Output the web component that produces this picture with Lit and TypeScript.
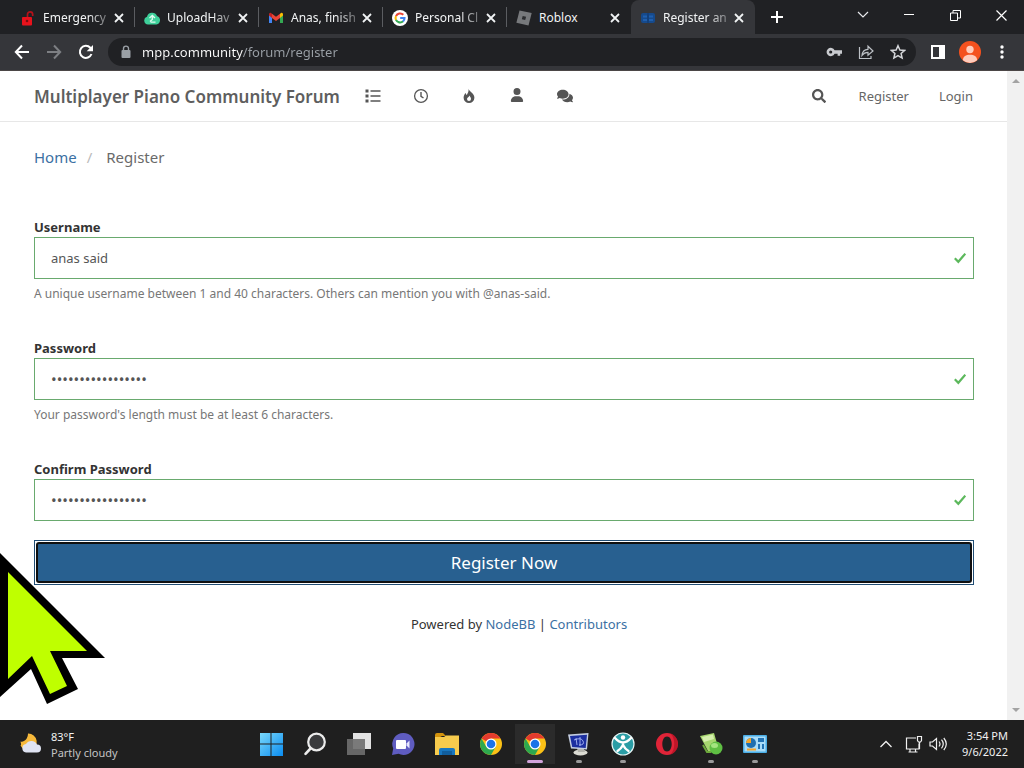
import { LitElement, html, svg, css, TemplateResult } from "lit";
import { customElement, property } from "lit/decorators.js";
import { classMap } from "lit/directives/class-map.js";

const icon = (viewBox: string, size: number, body: TemplateResult) =>
  html`<svg viewBox=${viewBox} width=${size} height=${size} aria-hidden="true">${body}</svg>`;

const closeGlyph = icon("0 0 10 10", 10, svg`<path d="M1 1l8 8M9 1l-8 8" fill="none" stroke="#f1f3f4" stroke-width="1.8"/>`);

const favicons = {
  lock: icon("0 0 16 16", 16, svg`
    <rect x="2" y="7" width="10" height="8.500" rx="1" fill="#e8121c"/>
    <path d="M7.500 7V4.500a2.600 2.600 0 0 1 5.200 0V6" fill="none" stroke="#b5121a" stroke-width="1.700"/>
    <circle cx="7" cy="11" r="1.300" fill="#7d0b10"/>`),
  cloud: icon("0 0 16 16", 16, svg`
    <path d="M4 14.500a4 4 0 0 1-1-7.800A5.300 5.300 0 0 1 13 6a4.400 4.400 0 0 1-.5 8.500z" fill="#3ecf9a"/>
    <path d="M5.500 8l2.800-2.500L11 8M8.300 6v3.500l-2.300 2M6.500 12.200h5" fill="none" stroke="#dffcf0" stroke-width="1.300"/>`),
  gmail: icon("0 0 16 16", 16, svg`
    <path d="M1 3.800V13h3V7z" fill="#4285f4"/><path d="M15 3.800V13h-3V7z" fill="#34a853"/>
    <path d="M12 3.800 13.400 2.700Q15 2.400 15 4.200V5.600L12 8z" fill="#fbbc04"/>
    <path d="M4 3.800 2.600 2.700Q1 2.400 1 4.200V5.600L4 8z" fill="#c5221f"/>
    <path d="M4 3.800l4 3 4-3V8l-4 3-4-3z" fill="#ea4335"/>`),
  google: icon("0 0 16 16", 16, svg`
    <circle cx="8" cy="8" r="8" fill="#fff"/>
    <g fill="none" stroke-width="2.100">
      <path d="M11.300 4.800A4.500 4.500 0 0 0 4 6.200" stroke="#ea4335"/>
      <path d="M4 6.100a4.500 4.500 0 0 0 0 3.900" stroke="#fbbc05"/>
      <path d="M4 9.900a4.500 4.500 0 0 0 7.100 1.400" stroke="#34a853"/>
      <path d="M11 11.400A4.500 4.500 0 0 0 12.500 8H8.200" stroke="#4285f4"/>
    </g>`),
  roblox: icon("0 0 16 16", 16, svg`
    <path d="M3.500.5l12.200 2.600L12.500 15.500.4 12.700z" fill="#77797c"/>
    <path d="M6.700 6l3.400.8-.9 3.300-3.400-.8z" fill="#2b2c2f"/>`),
  piano: icon("0 0 16 16", 16, svg`
    <rect x="1" y="3" width="14" height="10" rx="2" fill="#164a8c"/>
    <path d="M3 5.500h4v2H3zM3 9h4v2H3zM9 5.500h4v2H9zM9 9h4v2H9z" fill="#1f5fae"/>
    <path d="M8 3v10" stroke="#10376a"/>`),
};

@customElement("browser-tab")
class BrowserTab extends LitElement {
  @property() label = "";
  @property({ attribute: false }) favicon?: TemplateResult;
  @property({ type: Boolean, reflect: true }) active = false;
  @property({ type: Boolean, reflect: true }) divided = false;

  static styles = css`
    :host { display: flex; box-sizing: border-box; flex: 0 1 124px; min-width: 0; height: 34px; align-items: center; padding: 1px 10px 0 9px; border-right: 1px solid transparent; }
    :host([divided]) { border-image: linear-gradient(transparent 8px, #5b5d61 8px, #5b5d61 26px, transparent 26px) 1; }
    :host([active]) { background: #35363a; border-radius: 8px 8px 0 0; }
    .title { all: unset; flex: 1; min-width: 0; display: flex; align-items: center; gap: 7px; }
    svg { flex: none; display: block; }
    .text { flex: 1; min-width: 0; white-space: nowrap; font-size: 12px; line-height: 18px; color: #f1f3f4; }
    .text.fade { -webkit-mask-image: linear-gradient(to right, #000 65%, #0003); mask-image: linear-gradient(to right, #000 65%, #0003); }
    .close { all: unset; display: flex; flex: none; padding: 2px 0 2px 2px; }
  `;

  render() {
    return html`
      <button class="title">${this.favicon}<span class=${classMap({ text: true, fade: this.label.length > 8 })}>${this.label}</span></button>
      <button class="close" aria-label="Close tab">${closeGlyph}</button>`;
  }
}

@customElement("browser-chrome")
class BrowserChrome extends LitElement {
  static styles = css`
    :host { display: block; background: #202124; }
    button { all: unset; display: flex; align-items: center; justify-content: center; }
    svg { display: block; }
    .strip { display: flex; height: 34px; padding-left: 11px; }
    .tabs { display: flex; flex: 0 1 744px; min-width: 0; }
    .new { width: 44px; flex: none; }
    .spacer { flex: 1; }
    .win { width: 46px; height: 30px; flex: none; }
    .toolbar { display: flex; align-items: center; height: 36px; background: #35363a; border-bottom: 1px solid #4b4646; padding: 0 6px; }
    .tool { width: 32px; height: 28px; flex: none; }
    .omnibox { display: flex; align-items: center; flex: 1; min-width: 0; height: 28px; margin: 0 6px; padding: 0 2px 0 10px; border-radius: 14px; background: #202124; }
    .url { flex: 1; min-width: 0; margin-left: 8px; padding: 0; border: 0; outline: 0; font: 13px/20px "Noto Sans", "Open Sans", sans-serif; color: #fff; -webkit-text-fill-color: transparent; background: linear-gradient(to right, #fff 101px, #9aa0a6 101px); -webkit-background-clip: text; background-clip: text; }
  `;

  render() {
    const tabs = [
      { label: "Emergency", favicon: favicons.lock },
      { label: "UploadHav", favicon: favicons.cloud },
      { label: "Anas, finish", favicon: favicons.gmail },
      { label: "Personal Cl", favicon: favicons.google },
      { label: "Roblox", favicon: favicons.roblox },
      { label: "Register an", favicon: favicons.piano },
    ];
    const last = tabs.length - 1;
    return html`
      <div class="strip">
        <div class="tabs">
          ${tabs.map((t, i) => html`<browser-tab .label=${t.label} .favicon=${t.favicon} ?active=${i === last} ?divided=${i < last - 1}></browser-tab>`)}
        </div>
        <button class="new" aria-label="New tab">${icon("0 0 12 12", 12, svg`<path d="M6 0v12M0 6h12" stroke="#fff" stroke-width="2"/>`)}</button>
        <span class="spacer"></span>
        <button class="win" aria-label="Search tabs">${icon("0 0 12 12", 12, svg`<path d="M1 3l5 5 5-5" fill="none" stroke="#e8eaed" stroke-width="1.200"/>`)}</button>
        <button class="win" aria-label="Minimize">${icon("0 0 10 10", 10, svg`<path d="M0 4.500h10" stroke="#fff"/>`)}</button>
        <button class="win" aria-label="Restore">${icon("0 0 11 11", 11, svg`<path d="M.5 3h7v7.500h-7zM3 3V.5h7.500V8h-3" fill="none" stroke="#fff"/>`)}</button>
        <button class="win" aria-label="Close">${icon("0 0 11 11", 11, svg`<path d="M.5.5l10 10M10.500.5l-10 10" stroke="#fff" stroke-width="1.200"/>`)}</button>
      </div>
      <div class="toolbar">
        <button class="tool" aria-label="Back">${icon("0 0 16 16", 16, svg`<path d="M15 8H2M8 1.500L1.800 8 8 14.500" fill="none" stroke="#fff" stroke-width="2"/>`)}</button>
        <button class="tool" aria-label="Forward">${icon("0 0 16 16", 16, svg`<path d="M1 8h13M8 1.500L14.200 8 8 14.500" fill="none" stroke="#7d7f83" stroke-width="2"/>`)}</button>
        <button class="tool" aria-label="Reload">${icon("0 0 16 16", 16, svg`<path d="M13.500 10A6 6 0 1 1 12.300 3.800l1.200 1.300" fill="none" stroke="#fff" stroke-width="2"/><path d="M15 1v6.300H8.700z" fill="#fff"/>`)}</button>
        <div class="omnibox">
          ${icon("0 0 16 16", 16, svg`<rect x="3.500" y="6" width="9" height="8" rx="1" fill="#9aa0a6"/><path d="M5.500 6.500V4.600a2.500 2.500 0 0 1 5 0v1.900" fill="none" stroke="#9aa0a6" stroke-width="1.400"/>`)}
          <input class="url" aria-label="Address" .value=${"mpp.community/forum/register"} />
          <button class="tool" aria-label="Passwords">${icon("0 0 16 16", 16, svg`<path d="M8.600 6.300a4.200 4.200 0 1 0 0 3.400h3v2h2.600v-2H16V6.300zM4.700 9.600a1.600 1.600 0 1 1 0-3.200 1.600 1.600 0 0 1 0 3.200z" fill="#c9cbcf"/>`)}</button>
          <button class="tool" aria-label="Share">${icon("0 0 16 16", 16, svg`<path d="M1.500 3v11.500h11.500V12M4 11.500c.3-4 2.500-6 6-6.200V2.200L15 7l-5 4.300V8.400c-2.800 0-4.500 1-6 3.100z" fill="none" stroke="#bdc1c6" stroke-width="1.200"/>`)}</button>
          <button class="tool" aria-label="Bookmark">${icon("0 0 16 16", 16, svg`<path d="M8 1.700l1.900 4.300 4.700.4-3.500 3.100 1 4.600L8 11.700l-4.100 2.400 1-4.600L1.400 6.400l4.700-.4z" fill="none" stroke="#d5d7da" stroke-width="1.500"/>`)}</button>
        </div>
        <button class="tool" aria-label="Side panel">${icon("0 0 14 14", 14, svg`<path d="M1 1h12v12H1z" fill="none" stroke="#fff" stroke-width="2"/><path d="M8 1h5v12H8z" fill="#fff"/>`)}</button>
        <button class="tool" aria-label="Profile">${icon("0 0 22 22", 22, svg`<circle cx="11" cy="11" r="11" fill="#f4511e"/><circle cx="11" cy="8.500" r="3.700" fill="#ffccbc"/><path d="M3.800 19.300C4 15.500 7 13.800 11 13.800s7 1.700 7.200 5.500A11 11 0 0 1 3.800 19.300z" fill="#ffccbc"/>`)}</button>
        <button class="tool" aria-label="Menu">${icon("0 0 14 14", 14, svg`<g fill="#fff"><circle cx="7" cy="2" r="1.700"/><circle cx="7" cy="7" r="1.700"/><circle cx="7" cy="12" r="1.700"/></g>`)}</button>
      </div>`;
  }
}

const forumIcons = [
  { name: "Categories", art: icon("0 0 16 16", 16, svg`<path d="M.5 1.500h3v3h-3zM.5 6.500h3v3h-3zM.5 11.500h3v3h-3zM5.500 2.200H15.500v1.600H5.500zM5.500 7.200H15.500v1.600H5.500zM5.500 12.200H15.500v1.600H5.500z" fill="#555"/>`) },
  { name: "Recent", art: icon("0 0 16 16", 16, svg`<circle cx="8" cy="8" r="6.400" fill="none" stroke="#555" stroke-width="1.300"/><path d="M8 4v4.300l2.500 1.700" fill="none" stroke="#555" stroke-width="1.400"/>`) },
  { name: "Popular", art: icon("0 0 16 16", 16, svg`<path d="M7.500.8c.3 2.500 5.900 4.400 5.900 8.900a5.400 5.400 0 0 1-10.800 0c0-2.100 1-3.700 2.200-4.700.2 1.200.5 1.700 1 1.900C6.800 5 7.900 4 7.500.8zM8.300 7.400c.1 1.400-2.300 2-2.300 3.700a2 2 0 0 0 4 0c0-1.300-.7-2.500-1.700-3.700z" fill="#555" fill-rule="evenodd"/>`) },
  { name: "Users", art: icon("-32 0 512 512", 14, svg`<path fill="#555" d="M224 256A128 128 0 1 0 224 0a128 128 0 1 0 0 256zm-45.700 48C79.800 304 0 383.800 0 482.300C0 498.700 13.300 512 29.700 512H418.300c16.400 0 29.700-13.300 29.700-29.700C448 383.800 368.200 304 269.700 304H178.300z"/>`) },
  { name: "Chats", art: icon("0 -32 576 576", 16, svg`<path fill="#555" d="M416 192c0-88.400-93.100-160-208-160S0 103.600 0 192c0 34.300 14.100 65.900 38 92-13.400 30.200-35.500 54.200-35.800 54.500-2.200 2.300-2.800 5.700-1.500 8.700S4.800 352 8 352c36.600 0 66.900-12.300 88.700-25 32.200 15.700 70.300 25 111.300 25 114.900 0 208-71.600 208-160zm122 220c23.900-26 38-57.700 38-92 0-66.900-53.500-124.200-129.300-148.100.9 6.600 1.300 13.300 1.300 20.100 0 105.900-107.700 192-240 192-10.800 0-21.300-.8-31.700-1.900C207.800 439.600 281.800 480 368 480c41 0 79.100-9.200 111.300-25 21.800 12.700 52.100 25 88.700 25 3.200 0 6.100-1.900 7.300-4.800 1.300-2.900.7-6.300-1.500-8.700-.3-.3-22.400-24.200-35.800-54.500z"/>`) },
];

const searchGlyph = icon("0 0 512 512", 14, svg`<path fill="#555" d="M505 442.700L405.300 343c-4.500-4.500-10.600-7-17-7H372c27.600-35.300 44-79.700 44-128C416 93.100 322.900 0 208 0S0 93.100 0 208s93.100 208 208 208c48.300 0 92.700-16.400 128-44v16.300c0 6.400 2.500 12.500 7 17l99.700 99.700c9.400 9.400 24.600 9.400 33.900 0l28.300-28.300c9.400-9.400 9.400-24.600.1-34zM208 336c-70.700 0-128-57.200-128-128 0-70.700 57.200-128 128-128 70.700 0 128 57.200 128 128 0 70.700-57.200 128-128 128z"/>`);

const checkGlyph = icon("0 0 12 12", 12, svg`<path fill="none" stroke="#5cb85c" stroke-width="2.200" d="M.8 6.300L4.300 9.800 11.300 1.600"/>`);

@customElement("forum-page")
class ForumPage extends LitElement {
  static styles = css`
    :host { display: flex; background: #fff; color: #333; overflow: hidden; font-size: 13px; line-height: 20px; }
    .page { flex: 1; min-width: 0; }
    svg { display: block; }
    a { color: #3b70a3; text-decoration: none; }
    .navbar { display: flex; align-items: center; height: 50px; padding: 0 34px; border-bottom: 1px solid #e7e7e7; }
    .navbar a { color: #666; }
    .navbar .brand { padding-top: 2px; font-size: 17px; line-height: 24px; font-weight: 600; color: #5e5e5e; white-space: nowrap; }
    .icons { display: flex; gap: 32px; margin-left: 25px; }
    .icons a { display: flex; justify-content: center; width: 16px; }
    .search { all: unset; display: flex; }
    .account { display: flex; align-items: center; gap: 33px; margin-left: auto; }
    .account .link-group { display: flex; gap: 30px; }
    .content { padding: 23px 33px 0 34px; }
    .crumbs { display: flex; list-style: none; margin: 0; padding: 0; font-size: 15px; line-height: 24px; color: #6a6a6a; }
    .slash { padding: 0 14px 0 10px; color: #bbb; }
    form { margin: 48px 0 0; }
    .group { margin-bottom: 34px; }
    .group.tight { margin-bottom: 19px; }
    label { display: block; font-size: 13px; line-height: 20px; font-weight: 700; color: #333; }
    .field { display: flex; align-items: center; height: 40px; padding: 0 7px 0 16px; border: 1px solid #69aa6e; }
    input { flex: 1; min-width: 0; padding: 0; border: 0; outline: 0; background: none; font: 13px/20px "Noto Sans", "Open Sans", sans-serif; color: #555; }
    input[type="password"] { font-size: 15px; }
    .help { margin: 5px 0 0; font-size: 12px; line-height: 20px; color: #777; }
    .submit { all: unset; box-sizing: border-box; display: block; width: 100%; padding: 1px; border: 1px solid #204d74; }
    .face { display: block; border: 2px solid #101010; border-radius: 3px; background: #286090; color: #fff; font-size: 17px; line-height: 37px; text-align: center; }
    footer { margin-top: 29px; padding-left: 30px; text-align: center; }
    .scrollbar { display: flex; flex-direction: column; justify-content: space-between; align-items: center; width: 17px; flex: none; padding: 6px 0; box-sizing: border-box; background: #f1f1f1; }
  `;

  private field(id: string, label: string, type: string, value: string, help: string) {
    return html`
      <div class=${classMap({ group: true, tight: !help })}>
        <label for=${id}>${label}</label>
        <div class="field"><input id=${id} type=${type} .value=${value} />${checkGlyph}</div>
        ${help ? html`<p class="help">${help}</p>` : null}
      </div>`;
  }

  render() {
    return html`
      <div class="page">
        <nav class="navbar">
          <a class="brand" href="#">Multiplayer Piano Community Forum</a>
          <div class="icons">${forumIcons.map((i) => html`<a href="#" aria-label=${i.name}>${i.art}</a>`)}</div>
          <div class="account">
            <button class="search" aria-label="Search">${searchGlyph}</button>
            <div class="link-group"><a href="#">Register</a><a href="#">Login</a></div>
          </div>
        </nav>
        <main class="content">
          <ol class="crumbs"><li><a href="#">Home</a></li><li class="slash" aria-hidden="true">/</li><li>Register</li></ol>
          <form @submit=${(e: Event) => e.preventDefault()}>
            ${this.field("username", "Username", "text", "anas said", "A unique username between 1 and 40 characters. Others can mention you with @anas-said.")}
            ${this.field("password", "Password", "password", "x".repeat(17), "Your password's length must be at least 6 characters.")}
            ${this.field("confirm", "Confirm Password", "password", "x".repeat(17), "")}
            <button class="submit"><span class="face">Register Now</span></button>
          </form>
          <footer>Powered by <a href="#">NodeBB</a> | <a href="#">Contributors</a></footer>
        </main>
      </div>
      <div class="scrollbar">
        ${icon("0 0 8 8", 8, svg`<path d="M0 6l4-4 4 4z" fill="#a3a3a3"/>`)}
        ${icon("0 0 8 8", 8, svg`<path d="M0 2l4 4 4-4z" fill="#a3a3a3"/>`)}
      </div>`;
  }
}

const chromeLogo = icon("0 0 24 24", 24, svg`
  <circle cx="12" cy="12" r="11" fill="#fbc116"/>
  <path d="M12 12L2.500 6.500A11 11 0 0 1 21.500 6.500H12z" fill="#e33b2e"/>
  <path d="M2.500 6.500A11 11 0 0 0 12 23l4.700-8.300L12 12l-4.700 2.700z" fill="#2da94f"/>
  <circle cx="12" cy="12" r="5.500" fill="#fff"/><circle cx="12" cy="12" r="4.300" fill="#1a73e8"/>`);

const apps: { name: string; art: TemplateResult; state?: string }[] = [
  { name: "Start", art: icon("0 0 24 24", 24, svg`
    <defs><linearGradient id="w" x1="0" y1="0" x2="24" y2="24" gradientUnits="userSpaceOnUse"><stop offset="0" stop-color="#7fdcfb"/><stop offset="1" stop-color="#0a8cf0"/></linearGradient></defs>
    <path d="M1 1h10.500v10.500H1zM12.500 1H24v10.500H12.500zM1 12.500h10.500V24H1zM12.500 12.500H24V24H12.500z" fill="url(#w)"/>`) },
  { name: "Search", art: icon("0 0 24 24", 24, svg`<circle cx="13.500" cy="10" r="8.300" fill="#3a3b3d" stroke="#ececec" stroke-width="2.200"/><path d="M7.500 16.500l-5 5.300" stroke="#ececec" stroke-width="2.600" stroke-linecap="round"/>`) },
  { name: "Task view", art: icon("0 0 24 24", 24, svg`<path d="M6 1h18v16H6z" fill="#e2e2e2"/><path d="M0 7h18v16H0z" fill="#6f6f6f" opacity=".9"/>`) },
  { name: "Chat", art: icon("0 0 24 24", 24, svg`<path d="M12.500 1a11 11 0 1 1-5 20.800L1 23l1.200-6.500A11 11 0 0 1 12.500 1z" fill="#5f5cc0"/><rect x="5" y="8" width="10" height="9" rx="1" fill="#fff"/><path d="M15.500 11.500L18.500 8.500v8l-3-3z" fill="#e6e6ff"/>`) },
  { name: "File Explorer", art: icon("0 0 24 24", 24, svg`<path d="M0 3q0-2 2-2h6l3 3h-4L0 8z" fill="#d3930d"/><path d="M0 5h9l2-1.500h13V23H0z" fill="#f7cb4d"/><path d="M4 23v-5q0-2 2-2h12q2 0 2 2v5z" fill="#1877c0"/><path d="M7 19h10v4H7z" fill="#115e9d"/>`) },
  { name: "Chrome", art: chromeLogo },
  { name: "Chrome window", art: chromeLogo, state: "current" },
  { name: "Remote display", state: "open", art: icon("0 0 24 24", 24, svg`<ellipse cx="13.500" cy="20.500" rx="7" ry="3" fill="#dcdcd4"/><path d="M10 16l6-1 2 5h-7z" fill="#b5b5ae"/><path d="M1 2.500L21.500 1 20 17.500 4 16.500z" fill="#c3cde0"/><path d="M3 4l17-1.300-1.300 13.200L5.200 15z" fill="#1c2fa0"/><path d="M9 6l1 7M7 8q7-3 9 1t-4 4M13 5v9" fill="none" stroke="#b9c6ff" stroke-width=".8"/>`) },
  { name: "Fitness", state: "open", art: icon("0 0 24 24", 24, svg`<circle cx="12" cy="12" r="11" fill="#2a9da5" stroke="#e5f5f5" stroke-width="1.200"/><circle cx="12" cy="5.500" r="2.200" fill="#fff"/><path d="M4 6q4 4.500 8 4.500T20 6M12 10.500v3.500M12 13q-2 4-5.500 6M12 13q2 4 5.500 6" fill="none" stroke="#fff" stroke-width="2.400" stroke-linecap="round"/>`) },
  { name: "Opera", art: icon("0 0 24 24", 24, svg`<path fill-rule="evenodd" d="M12 1a11 11 0 1 0 0 22 11 11 0 0 0 0-22zm0 3.500c3 0 4.700 3.600 4.700 7.500s-1.700 7.500-4.700 7.500S7.300 15.900 7.300 12 9 4.500 12 4.500z" fill="#e02438"/><path d="M15.500 1.600a11 11 0 0 1 0 20.800c5-4.500 5-16.300 0-20.800z" fill="#a70d1e" opacity=".6"/>`) },
  { name: "Notes", state: "open", art: icon("0 0 24 24", 24, svg`<path d="M1 4L15 1l4 14-9 6z" fill="#a6d66f"/><path d="M3 5l11-2.500L15 7 5 10z" fill="#d5efad"/><circle cx="17" cy="16" r="6.500" fill="#5fbf43"/><ellipse cx="15.500" cy="13.500" rx="3.500" ry="2.500" fill="#a4e580"/><path d="M4 13l4 7h4" fill="none" stroke="#6da93c" stroke-width="2"/>`) },
  { name: "Control Panel", state: "open", art: icon("0 0 24 24", 24, svg`<rect x="0" y="3" width="24" height="18" rx="1" fill="#4aaee6"/><rect x="1.500" y="4.500" width="21" height="15" fill="#a9dcf8"/><circle cx="8" cy="11" r="5" fill="#1e6fb0"/><path d="M8 11V6a5 5 0 0 0-5 5z" fill="#f4a52b"/><path d="M15 6h6v4h-6zM15 12h2v5h-2zM19 12h2v5h-2z" fill="#2173b5"/><path d="M4 17.500h9" stroke="#f4a52b" stroke-width="2"/>`) },
];

@customElement("task-bar")
class TaskBar extends LitElement {
  static styles = css`
    :host { display: grid; grid-template-columns: 1fr auto 1fr; height: 48px; background: #1f1f1f; color: #f2f2f2; font-size: 11px; line-height: 16px; }
    button { all: unset; box-sizing: border-box; }
    svg { display: block; }
    .weather { display: flex; align-items: center; gap: 8px; padding-left: 19px; }
    .weather .sky { color: #c4c4c4; }
    .lines { display: block; padding-top: 2px; }
    .line { display: block; }
    .apps { display: flex; padding-left: 2px; }
    .app { display: flex; flex-direction: column; align-items: center; width: 44px; height: 48px; padding-top: 12px; gap: 4px; }
    .app.current { background: linear-gradient(#2b2b2b, #2b2b2b) 2px 4px / 40px 40px no-repeat; }
    .pill { width: 6px; height: 3px; border-radius: 2px; background: #9a9a9a; }
    .current .pill { width: 16px; background: #d3a4dc; }
    .tray { display: flex; align-items: center; justify-content: flex-end; gap: 4px; padding-right: 16px; }
    .status { display: flex; gap: 4px; padding: 0 10px 0 4px; }
    .clock { text-align: right; }
  `;

  render() {
    return html`
      <button class="weather">
        ${icon("0 0 24 24", 24, svg`<path d="M9 1.500a8.500 8.500 0 1 1-7.500 12C2.500 13 2 11.500 1.500 9.500 5 10.500 9 7 9 1.500z" fill="#f6b93b"/><path d="M7 20.500a4.300 4.300 0 0 1 0-8.500 6.300 6.300 0 0 1 11 .5 4 4 0 0 1 0 8z" fill="#dfe3f2"/>`)}
        <span class="lines"><span class="line">83°F</span><span class="line sky">Partly cloudy</span></span>
      </button>
      <div class="apps">
        ${apps.map((a) => html`<button class=${classMap({ app: true, current: a.state === "current" })} aria-label=${a.name}>${a.art}${a.state ? html`<span class="pill"></span>` : null}</button>`)}
      </div>
      <div class="tray">
        <button aria-label="Hidden icons">${icon("0 0 20 20", 20, svg`<path d="M4.500 13L10 7.500l5.500 5.500" fill="none" stroke="#f0f0f0" stroke-width="1.300"/>`)}</button>
        <div class="status">
          <button aria-label="Network">${icon("0 0 20 20", 20, svg`<path d="M12 4H2.500v11H15V9.500M6 15v3M11.500 15v3M4.500 18h9M13.500 2.500h4v4l-1 1.500h-2l-1-1.500zM15.500 8v7" fill="none" stroke="#f0f0f0" stroke-width="1.200"/>`)}</button>
          <button aria-label="Volume">${icon("0 0 20 20", 20, svg`<path d="M2 8h2.500L8.500 4.500v11L4.500 12H2zM11 7.500q2 2.500 0 5M13.500 5.700q3.500 4.300 0 8.600M15.800 4q5 6 0 12" fill="none" stroke="#f0f0f0" stroke-width="1.200"/>`)}</button>
        </div>
        <button class="clock"><span class="line">3:54 PM</span><span class="line">9/6/2022</span></button>
      </div>`;
  }
}

@customElement("app-root")
class AppRoot extends LitElement {
  static styles = css`
    :host { display: flex; flex-direction: column; position: relative; height: 100vh; overflow: hidden; font-family: "Noto Sans", "Open Sans", sans-serif; }
    forum-page { flex: 1; min-height: 0; }
    .pointer { position: absolute; left: 0; bottom: 63px; display: block; pointer-events: none; }
  `;

  render() {
    return html`
      <browser-chrome></browser-chrome>
      <forum-page></forum-page>
      <task-bar></task-bar>
      <svg class="pointer" viewBox="0 0 106 152" width="106" height="152" aria-hidden="true">
        <path d="M0 0L105 105H62L78 136 47 151 31 116 0 144z" fill="#000"/>
        <path d="M8 19L87 98H50L67 133 50 141 32 103 8 126z" fill="#bfff00"/>
      </svg>`;
  }
}
